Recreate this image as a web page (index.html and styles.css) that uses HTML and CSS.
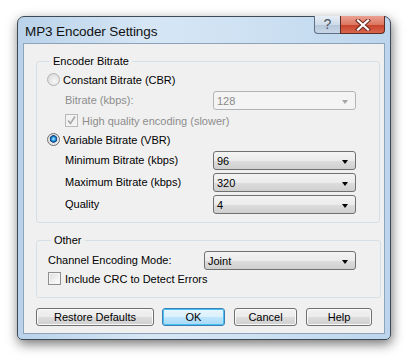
FILE: index.html
```html
<html>
    <head>
        <link rel="stylesheet" href="styles.css">
    </head>
    <body>
        <div class="window">
            <div class="titlebar">
                <div class="title">MP3 Encoder Settings</div>
                <div class="caption">
                    <div class="cap-help">?</div>
                    <div class="cap-close">
                        <svg width="16" height="12" viewBox="0 0 16 12">
                            <path d="M3 1.5 L13 10.5 M13 1.5 L3 10.5" stroke="#6b2a22" stroke-width="4.2" stroke-linecap="square" />
                            <path d="M3 1.5 L13 10.5 M13 1.5 L3 10.5" stroke="#ffffff" stroke-width="2.2" stroke-linecap="square" />
                        </svg>
                    </div>
                </div>
            </div>
            <div class="client">
                <fieldset class="group group-bitrate">
                    <legend>Encoder Bitrate</legend>
                    <div class="row row-opt">
                        <span class="radio disabled"></span>
                        <span class="opt-text">Constant Bitrate (CBR)</span>
                    </div>
                    <div class="row row-field indent">
                        <span class="label label-wide dim">Bitrate (kbps):</span>
                        <div class="combo combo-bitrate disabled"><span>128</span><i class="arrow"></i></div>
                    </div>
                    <div class="row row-check indent">
                        <span class="check disabled">
                            <svg width="11" height="11" viewBox="0 0 11 11"><path d="M2 5.5 L4.5 8.5 L9 1.5" stroke="#a6a6a6" stroke-width="1.6" fill="none" /></svg>
                        </span>
                        <span class="opt-text dim">High quality encoding (slower)</span>
                    </div>
                    <div class="row row-opt row-vbr">
                        <span class="radio checked"></span>
                        <span class="opt-text">Variable Bitrate (VBR)</span>
                    </div>
                    <div class="row row-field indent row-min">
                        <span class="label label-wide">Minimum Bitrate (kbps)</span>
                        <div class="combo combo-bitrate"><span>96</span><i class="arrow"></i></div>
                    </div>
                    <div class="row row-field indent">
                        <span class="label label-wide">Maximum Bitrate (kbps)</span>
                        <div class="combo combo-bitrate"><span>320</span><i class="arrow"></i></div>
                    </div>
                    <div class="row row-field indent">
                        <span class="label label-wide">Quality</span>
                        <div class="combo combo-bitrate"><span>4</span><i class="arrow"></i></div>
                    </div>
                </fieldset>
                <fieldset class="group group-other">
                    <legend>Other</legend>
                    <div class="row row-field">
                        <span class="label label-mode">Channel Encoding Mode:</span>
                        <div class="combo combo-mode"><span>Joint</span><i class="arrow"></i></div>
                    </div>
                    <div class="row row-check row-crc">
                        <span class="check"></span>
                        <span class="opt-text">Include CRC to Detect Errors</span>
                    </div>
                </fieldset>
                <div class="buttons">
                    <button class="btn btn-restore">Restore Defaults</button>
                    <button class="btn btn-ok">OK</button>
                    <button class="btn btn-cancel">Cancel</button>
                    <button class="btn btn-help">Help</button>
                </div>
            </div>
        </div>
    </body>
</html>
```

FILE: styles.css
```css
html{
    background-color: white;
}
body{
    margin: 0;
    padding-top: 16px;
    padding-left: 17px;
    font-family: "Liberation Sans", Arial, sans-serif;
    font-size: 11px;
    color: black;
}
.window{
    width: 372px;
    height: 322px;
    border: 1px solid #3f4a57;
    border-radius: 7px 7px 5px 5px;
    background: linear-gradient(to right, #b9d2ea 0%, #d6e6f5 35%, #cfe2f3 60%, #bcd5ec 100%);
    box-shadow: 1px 4px 12px rgba(0,0,0,0.55);
    display: flex;
    flex-direction: column;
}
.titlebar{
    height: 26px;
    display: flex;
    justify-content: space-between;
    align-items: flex-start;
}
.title{
    font-size: 13.5px;
    padding-left: 7px;
    padding-top: 7px;
    color: #111111;
    letter-spacing: -0.1px;
}
.caption{
    display: flex;
    margin-right: 5px;
    margin-top: -1px;
}
.cap-help{
    width: 25px;
    height: 17px;
    border: 1px solid #5f6f86;
    border-right: none;
    border-top: none;
    border-radius: 0 0 0 4px;
    background: linear-gradient(to bottom, #e7eef6 0%, #cfdbe8 50%, #b4c6da 51%, #c8d7e7 100%);
    color: #4b5563;
    font-size: 14px;
    text-align: center;
    line-height: 17px;
}
.cap-close{
    width: 43px;
    height: 17px;
    border: 1px solid #5a2a24;
    border-top: none;
    border-radius: 0 0 4px 0;
    background: linear-gradient(to bottom, #eba192 0%, #dc7762 50%, #c8412a 51%, #d9664d 100%);
    display: flex;
    align-items: center;
    justify-content: center;
}
.client{
    margin-left: 5px;
    width: 360px;
    height: 289px;
    border: 1px solid #8ea3ba;
    background-color: #f0f0f0;
}
.group{
    margin: 0;
    margin-left: 12px;
    padding: 0;
    width: 332px;
    border: 1px solid #d5dfe5;
    border-radius: 3px;
    min-inline-size: 0;
}
.group legend{
    margin-left: 3px;
    padding: 0 3px;
    line-height: 14px;
    font-size: 11px;
}
.group-bitrate{
    margin-top: 10px;
    padding-left: 10px;
    padding-top: 5px;
    padding-bottom: 8px;
}
.group-other{
    margin-top: 10px;
    padding-left: 11px;
    padding-top: 4px;
    padding-bottom: 12px;
}
.row{
    display: flex;
    align-items: center;
}
.row-opt, .row-check{
    height: 13px;
}
.row-field{
    height: 19px;
    align-items: flex-start;
}
.indent{
    padding-left: 18px;
}
.row-field.indent{
    margin-top: 5px;
}
.row-field.indent + .row-field{
    margin-top: 3px;
}
.row-check.indent{
    margin-top: 4px;
}
.row-vbr{
    margin-top: 6px;
}
.row-min{
    margin-top: 5px;
}
.row-crc{
    margin-top: 2px;
}
.label{
    padding-top: 3px;
}
.label-wide{
    width: 148px;
}
.label-mode{
    width: 156px;
}
.dim{
    color: #8d8d8d;
}
.opt-text{
    margin-left: 3px;
}
.row-check .opt-text{
    margin-left: 4px;
}
.radio{
    width: 11px;
    height: 11px;
    border-radius: 50%;
    border: 1px solid #8a8a8a;
    background: radial-gradient(circle at 60% 65%, #ffffff 0%, #e9e9e9 45%, #c9c9c9 100%);
}
.radio.disabled{
    border-color: #b3b3b3;
    background: radial-gradient(circle at 60% 65%, #f6f6f6 0%, #e6e6e6 50%, #d3d3d3 100%);
}
.radio.checked{
    border-color: #6e6e6e;
    background: radial-gradient(circle at 50% 45%, #c4f0ff 0%, #3fb2f0 18%, #0f62b8 34%, #1b3f6e 42%, #e2e2e2 50%, #f7f7f7 100%);
}
.check{
    width: 11px;
    height: 11px;
    border: 1px solid #8f8f8f;
    background: linear-gradient(135deg, #dcdcdc 0%, #f2f2f2 60%, #ffffff 100%);
    box-shadow: inset 0 0 0 1px #f4f4f4;
    display: flex;
    align-items: center;
    justify-content: center;
}
.check.disabled{
    border-color: #b8b8b8;
    background: #f2f2f2;
}
.combo{
    height: 17px;
    border: 1px solid #707070;
    border-radius: 3px;
    background: linear-gradient(to bottom, #f4f4f4 0%, #ebebeb 50%, #dddddd 51%, #cfcfcf 100%);
    display: flex;
    align-items: center;
    justify-content: space-between;
    padding-left: 3px;
    padding-right: 7px;
}
.combo.disabled{
    border-color: #b1b5b8;
    background: #f4f4f4;
    color: #8a8a8a;
}
.combo-bitrate{
    width: 131px;
}
.combo-mode{
    width: 140px;
}
.arrow{
    width: 0;
    height: 0;
    border-left: 3.5px solid transparent;
    border-right: 3.5px solid transparent;
    border-top: 4px solid #000000;
    margin-top: 2px;
}
.combo.disabled .arrow{
    border-top-color: #a6a6a6;
}
.buttons{
    display: flex;
    margin-top: 10px;
    margin-left: 12px;
}
.btn{
    height: 18px;
    padding: 0;
    border: 1px solid #707070;
    border-radius: 3px;
    background: linear-gradient(to bottom, #f2f2f2 0%, #ebebeb 50%, #dddddd 51%, #cfcfcf 100%);
    font-family: "Liberation Sans", Arial, sans-serif;
    font-size: 11px;
    color: black;
    box-shadow: inset 0 0 0 1px #fafafa;
}
.btn-restore{
    width: 118px;
}
.btn-ok{
    width: 63px;
    margin-left: 8px;
    border-color: #3c7fb1;
    background: linear-gradient(to bottom, #eaf6fd 0%, #d9f0fc 50%, #bee6fd 51%, #a7d9f5 100%);
    box-shadow: inset 0 0 0 1px #48c0f5;
}
.btn-cancel{
    width: 63px;
    margin-left: 9px;
}
.btn-help{
    width: 66px;
    margin-left: 9px;
}
```
